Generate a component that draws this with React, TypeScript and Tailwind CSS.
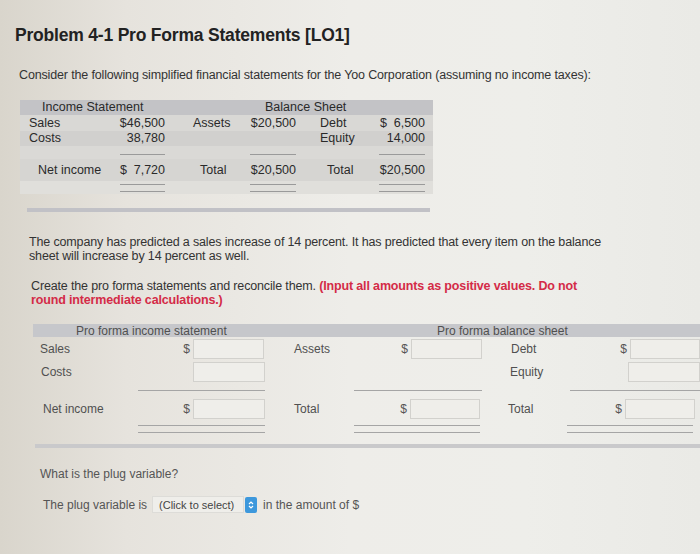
import React from "react";

function Input({ w = "w-[71px]" }: { w?: string }) {
  return <div className={`${w} h-[20px] border border-[#d2d1cd] bg-[#efeeea]`} />;
}

function MoneyCell({ width, dollar, inputW, mr }: { width: string; dollar: boolean; inputW: string; mr: string }) {
  return (
    <div className={`${width} flex items-center justify-end`}>
      {dollar && <span className="mr-[3px] text-[#555]">$</span>}
      <div className={mr}>
        <Input w={inputW} />
      </div>
    </div>
  );
}

export default function App() {
  return (
    <div className="relative h-[554px] w-[700px] overflow-hidden bg-[linear-gradient(90deg,#d9d5cc_0%,#e6e3dd_18%,#eeede9_50%,#eeeeea_75%,#eaeae6_100%)] font-['Liberation_Sans',Arial,sans-serif] text-[#333]">
      {/* Title */}
      <div className="pl-[15px] pt-[25px] text-[17.5px] font-bold leading-[20px] tracking-[-0.2px] text-[#222]">
        Problem 4-1 Pro Forma Statements [LO1]
      </div>

      {/* Intro */}
      <div className="mt-[23px] pl-[19px] text-[12.5px] leading-[15px] tracking-[-0.15px] text-[#333]">
        Consider the following simplified financial statements for the Yoo Corporation (assuming no income taxes):
      </div>

      {/* Top table */}
      <div className="ml-[20px] mt-[17px] w-[413px] text-[12.5px] leading-[15px] text-[#2a2a2a]">
        <div className="flex h-[15px] items-center bg-[#c3c3c6]">
          <span className="w-[245px] pl-[22px]">Income Statement</span>
          <span>Balance Sheet</span>
        </div>
        <div className="flex h-[16px] items-center bg-[#d9d8d5]">
          <div className="w-[90px] pl-[9px]">Sales</div>
          <div className="w-[56px] pr-[1px] text-right">$46,500</div>
          <div className="w-[84px] pl-[27px]">Assets</div>
          <div className="w-[48px] pr-[2px] text-right">$20,500</div>
          <div className="w-[72px] pl-[22px]">Debt</div>
          <div className="flex w-[63px] justify-end pr-[8px]">
            <div className="flex w-[45px] justify-between">
              <span>$</span>
              <span>6,500</span>
            </div>
          </div>
        </div>
        <div className="flex h-[15px] items-center bg-[#d1d0ce]">
          <div className="w-[90px] pl-[9px]">Costs</div>
          <div className="w-[56px] pr-[1px] text-right">38,780</div>
          <div className="w-[84px]" />
          <div className="w-[48px]" />
          <div className="w-[72px] pl-[22px]">Equity</div>
          <div className="w-[63px] pr-[8px] text-right">14,000</div>
        </div>
        <div className="flex h-[13px] items-end bg-[#dad9d6] pb-[4px]">
          <div className="w-[90px]" />
          <div className="flex w-[56px] justify-end pr-[1px]">
            <div className="h-px w-[45px] bg-[#9a9a9a]" />
          </div>
          <div className="w-[84px]" />
          <div className="flex w-[48px] justify-end pr-[2px]">
            <div className="h-px w-[46px] bg-[#9a9a9a]" />
          </div>
          <div className="w-[72px]" />
          <div className="flex w-[63px] justify-end pr-[8px]">
            <div className="h-px w-[46px] bg-[#9a9a9a]" />
          </div>
        </div>
        <div className="flex h-[22px] items-center bg-[#d6d5d2]">
          <div className="w-[90px] pl-[18px]">Net income</div>
          <div className="flex w-[56px] justify-end pr-[1px]">
            <div className="flex w-[45px] justify-between">
              <span>$</span>
              <span>7,720</span>
            </div>
          </div>
          <div className="w-[84px] pl-[34px]">Total</div>
          <div className="w-[48px] pr-[2px] text-right">$20,500</div>
          <div className="w-[72px] pl-[29px]">Total</div>
          <div className="w-[63px] pr-[8px] text-right">$20,500</div>
        </div>
        <div className="flex h-[13px] items-start bg-[#e0dfdb] pt-[3px]">
          <div className="w-[90px]" />
          {[
            ["w-[56px]", "pr-[1px]", "w-[45px]"],
            ["w-[84px]", "", ""],
            ["w-[48px]", "pr-[2px]", "w-[46px]"],
            ["w-[72px]", "", ""],
            ["w-[63px]", "pr-[8px]", "w-[46px]"],
          ].map(([cw, pr, lw], i) => (
            <div key={i} className={`flex ${cw} justify-end ${pr}`}>
              {lw && (
                <div className={`flex ${lw} flex-col gap-[6px]`}>
                  <div className="h-px bg-[#9a9a9a]" />
                  <div className="h-px bg-[#9a9a9a]" />
                </div>
              )}
            </div>
          ))}
        </div>
      </div>

      {/* separator */}
      <div className="ml-[27px] mt-[14px] h-[4px] w-[403px] bg-[#c1c1c6]" />

      {/* Paragraphs */}
      <div className="mt-[23px] w-[615px] pl-[29px] text-[12.5px] leading-[14px] tracking-[-0.15px] text-[#333]">
        The company has predicted a sales increase of 14 percent. It has predicted that every item on the balance sheet will increase by 14 percent as well.
      </div>
      <div className="mt-[16px] w-[590px] pl-[31px] text-[12.5px] leading-[14px] tracking-[-0.15px] text-[#333]">
        Create the pro forma statements and reconcile them.{" "}
        <span className="font-bold text-[#d42b47]">
          (Input all amounts as positive values. Do not round intermediate calculations.)
        </span>
      </div>

      {/* Pro forma table */}
      <div className="ml-[33px] mt-[17px] text-[12px] leading-[14px] text-[#505050]">
        <div className="flex h-[13px] items-center bg-[#c6c7cb]">
          <span className="w-[404px] pl-[43px]">Pro forma income statement</span>
          <span>Pro forma balance sheet</span>
        </div>
        {/* Sales row */}
        <div className="mt-[1px] flex h-[21px] items-center">
          <div className="w-[105px] pl-[7px]">Sales</div>
          <MoneyCell width="w-[130px]" dollar inputW="w-[71px]" mr="mr-[4px]" />
          <div className="w-[86px] pl-[26px]">Assets</div>
          <MoneyCell width="w-[130px]" dollar inputW="w-[71px]" mr="mr-[2px]" />
          <div className="w-[83px] pl-[27px]">Debt</div>
          <MoneyCell width="w-[133px]" dollar inputW="w-[70px]" mr="mr-0" />
        </div>
        {/* Costs row */}
        <div className="mt-[2px] flex h-[21px] items-center">
          <div className="w-[105px] pl-[8px]">Costs</div>
          <MoneyCell width="w-[130px]" dollar={false} inputW="w-[72px]" mr="mr-[3px]" />
          <div className="w-[86px]" />
          <div className="w-[130px]" />
          <div className="w-[83px] pl-[26px]">Equity</div>
          <MoneyCell width="w-[133px]" dollar={false} inputW="w-[72px]" mr="mr-0" />
        </div>
        {/* single lines */}
        <div className="mt-[8px] flex h-px">
          <div className="w-[105px]" />
          <div className="h-px w-[127px] bg-[#a5a5a5]" />
          <div className="w-[89px]" />
          <div className="h-px w-[128px] bg-[#a5a5a5]" />
          <div className="w-[88px]" />
          <div className="h-px w-[130px] bg-[#a5a5a5]" />
        </div>
        {/* Net income row */}
        <div className="mt-[7px] flex h-[21px] items-center">
          <div className="w-[105px] pl-[10px]">Net income</div>
          <MoneyCell width="w-[130px]" dollar inputW="w-[72px]" mr="mr-[3px]" />
          <div className="w-[86px] pl-[26px]">Total</div>
          <MoneyCell width="w-[130px]" dollar inputW="w-[70px]" mr="mr-[4px]" />
          <div className="w-[83px] pl-[24px]">Total</div>
          <MoneyCell width="w-[133px]" dollar inputW="w-[70px]" mr="mr-[5px]" />
        </div>
        {/* double lines */}
        <div className="mt-[6px] flex">
          <div className="w-[105px]" />
          <div className="flex w-[127px] flex-col gap-[6px]">
            <div className="h-px bg-[#a5a5a5]" />
            <div className="h-px bg-[#a5a5a5]" />
          </div>
          <div className="w-[89px]" />
          <div className="flex w-[126px] flex-col gap-[6px]">
            <div className="h-px bg-[#a5a5a5]" />
            <div className="h-px bg-[#a5a5a5]" />
          </div>
          <div className="w-[87px]" />
          <div className="flex w-[126px] flex-col gap-[6px]">
            <div className="h-px bg-[#a5a5a5]" />
            <div className="h-px bg-[#a5a5a5]" />
          </div>
        </div>
      </div>

      {/* separator 2 */}
      <div className="ml-[35px] mt-[11px] h-[4px] w-[665px] bg-[#c9c9cb]" />

      {/* Plug */}
      <div className="mt-[19px] pl-[40px] text-[12px] leading-[14px] text-[#555]">What is the plug variable?</div>
      <div className="mt-[15px] flex items-center pl-[43px] text-[12px] leading-[14px] text-[#555]">
        <span>The plug variable is</span>
        <div className="ml-[5px] flex h-[17px] w-[92px] items-center border border-[#dddcd8] bg-[#efeeea] pl-[6px] text-[11px] text-[#444]">
          (Click to select)
        </div>
        <div className="ml-[1px] flex h-[16px] w-[12px] items-center justify-center rounded-[2px] bg-[#3d98dc]">
          <svg width="6" height="10" viewBox="0 0 6 10">
            <path d="M1 4 L3 2 L5 4" stroke="white" strokeWidth="1.2" fill="none" />
            <path d="M1 6 L3 8 L5 6" stroke="white" strokeWidth="1.2" fill="none" />
          </svg>
        </div>
        <span className="ml-[6px]">in the amount of $</span>
      </div>
    </div>
  );
}
